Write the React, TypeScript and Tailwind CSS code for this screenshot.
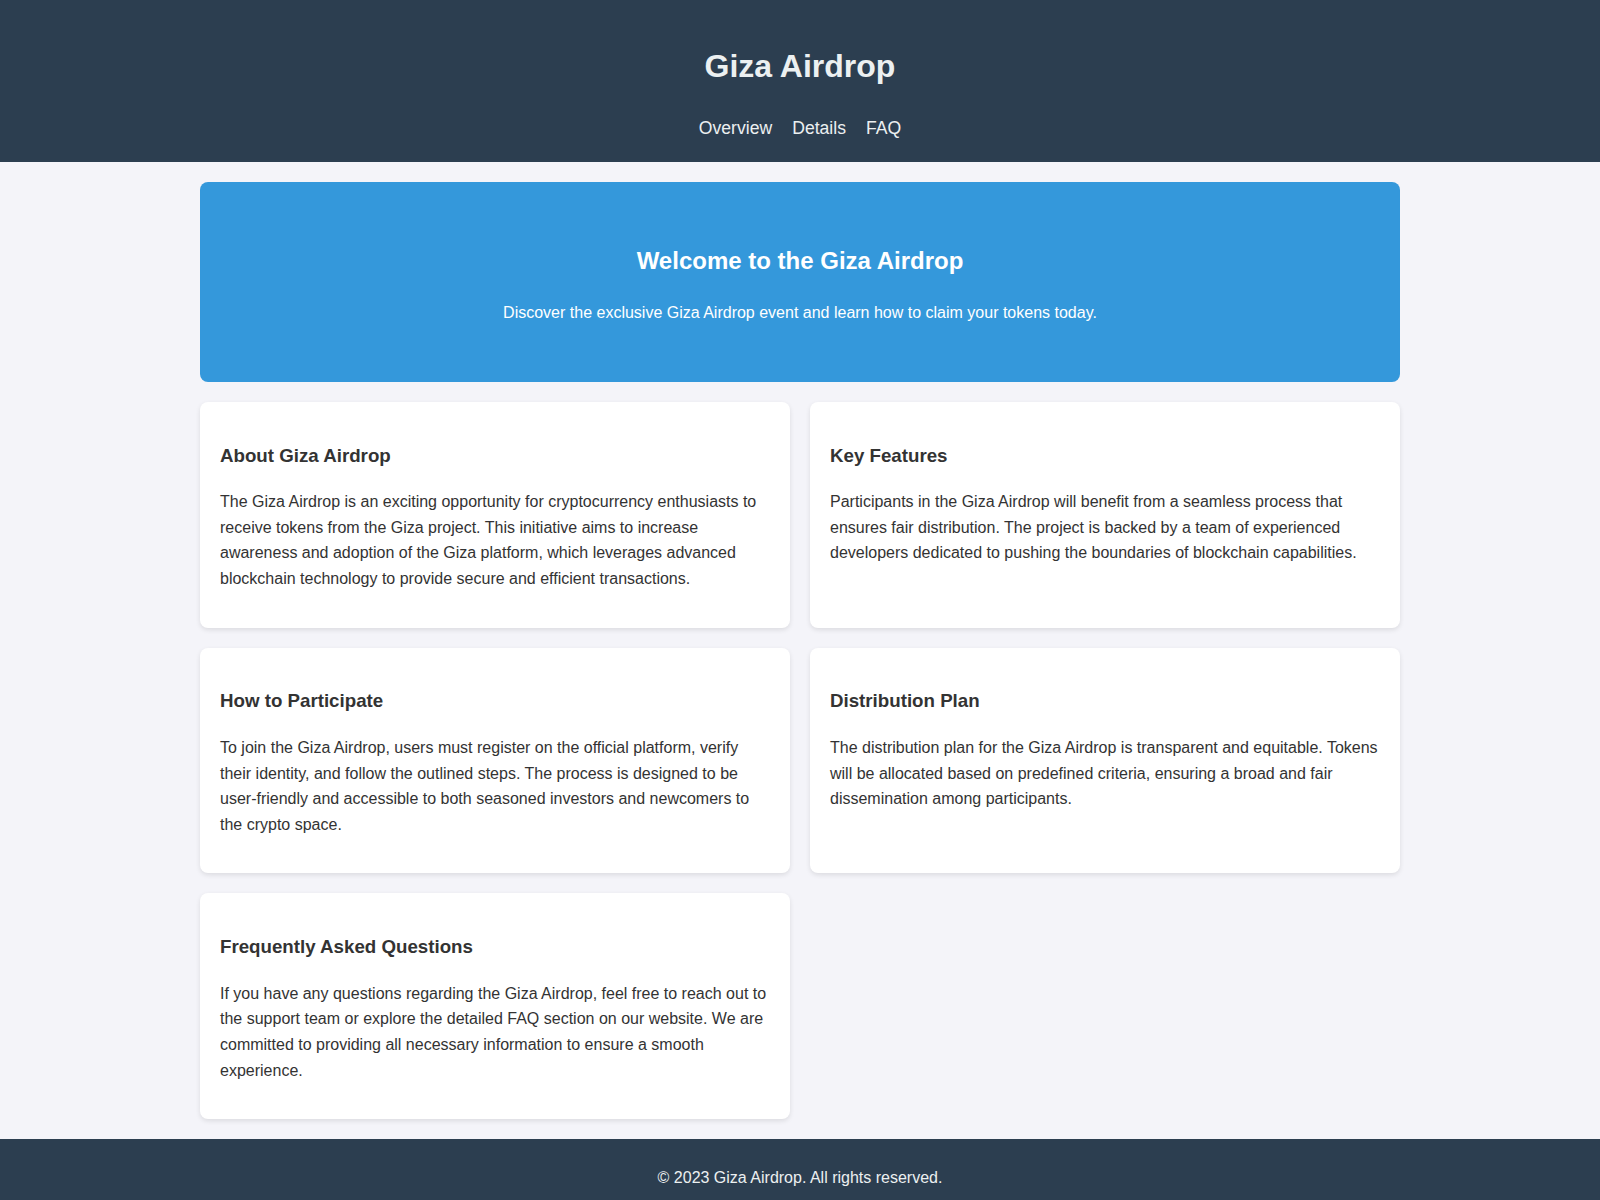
import React from "react";

const cards = [
  {
    title: "About Giza Airdrop",
    body: "The Giza Airdrop is an exciting opportunity for cryptocurrency enthusiasts to receive tokens from the Giza project. This initiative aims to increase awareness and adoption of the Giza platform, which leverages advanced blockchain technology to provide secure and efficient transactions.",
  },
  {
    title: "Key Features",
    body: "Participants in the Giza Airdrop will benefit from a seamless process that ensures fair distribution. The project is backed by a team of experienced developers dedicated to pushing the boundaries of blockchain capabilities.",
  },
  {
    title: "How to Participate",
    body: "To join the Giza Airdrop, users must register on the official platform, verify their identity, and follow the outlined steps. The process is designed to be user-friendly and accessible to both seasoned investors and newcomers to the crypto space.",
  },
  {
    title: "Distribution Plan",
    body: "The distribution plan for the Giza Airdrop is transparent and equitable. Tokens will be allocated based on predefined criteria, ensuring a broad and fair dissemination among participants.",
  },
  {
    title: "Frequently Asked Questions",
    body: "If you have any questions regarding the Giza Airdrop, feel free to reach out to the support team or explore the detailed FAQ section on our website. We are committed to providing all necessary information to ensure a smooth experience.",
  },
];

export default function App() {
  return (
    <div
      className="min-h-screen bg-[#f4f4f9] text-[#333] text-[16px] leading-[1.6]"
      style={{ fontFamily: '"Liberation Sans", Arial, Helvetica, sans-serif' }}
    >
      <header className="bg-[#2c3e50] text-[#ecf0f1] text-center pt-[41px] pb-[20px]">
        <h1 className="text-[32px] font-bold leading-[51px]">Giza Airdrop</h1>
        <nav className="mt-[22px] flex justify-center gap-[20px] text-[17.6px] leading-[28px]">
          <a href="#overview" className="text-[#ecf0f1]">Overview</a>
          <a href="#details" className="text-[#ecf0f1]">Details</a>
          <a href="#faq" className="text-[#ecf0f1]">FAQ</a>
        </nav>
      </header>

      <main className="max-w-[1200px] mx-auto py-5 flex flex-col gap-5">
        <section className="bg-[#3498db] text-white text-center rounded-[8px] p-[40px]">
          <h2 className="text-[24px] font-bold leading-[38.4px] mt-[19.92px]">
            Welcome to the Giza Airdrop
          </h2>
          <p className="mt-[19.92px] mb-[16px]">
            Discover the exclusive Giza Airdrop event and learn how to claim your tokens today.
          </p>
        </section>

        <div className="grid grid-cols-2 gap-5">
          {cards.map((c) => (
            <div
              key={c.title}
              className="bg-white rounded-[8px] p-[20px] shadow-[0_2px_5px_rgba(0,0,0,0.1)]"
            >
              <h3 className="text-[18.72px] font-bold leading-[30px] mt-[18.72px]">{c.title}</h3>
              <p className="mt-[18.72px] mb-[16px]">{c.body}</p>
            </div>
          ))}
        </div>
      </main>

      <footer className="bg-[#2c3e50] text-[#ecf0f1] text-center pt-[26px] pb-[24px]">
        <p>© 2023 Giza Airdrop. All rights reserved.</p>
      </footer>
    </div>
  );
}
